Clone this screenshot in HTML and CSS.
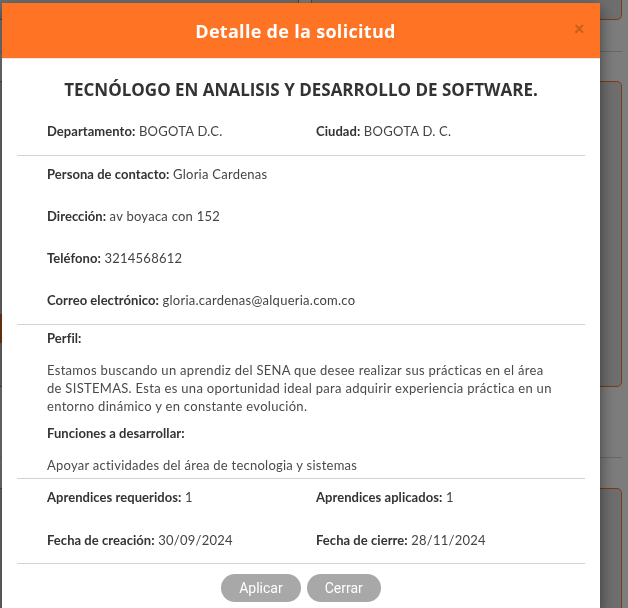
FILE: index.html
```html
<!DOCTYPE html>
<html lang="es">
<head>
<meta charset="utf-8">
<title>Detalle de la solicitud</title>
<link rel="stylesheet" href="styles.css">
</head>
<body>
<div class="page">
  <div class="page-row row-a">
    <div class="bg-card"></div>
    <div class="bg-card"></div>
  </div>
  <div class="page-divider"></div>
  <div class="page-row row-b">
    <div class="bg-card"><div class="bg-btn"></div></div>
    <div class="bg-card"></div>
  </div>
  <div class="page-divider second"></div>
  <div class="page-row row-c">
    <div class="bg-card"></div>
    <div class="bg-card"></div>
  </div>
</div>

<div class="overlay">
  <div class="modal">
    <div class="modal-header">
      <h3 class="modal-title">Detalle de la solicitud</h3>
      <span class="close">×</span>
    </div>
    <div class="modal-body">
      <h4 class="program">TECNÓLOGO EN ANALISIS Y DESARROLLO DE SOFTWARE.</h4>
      <div class="grid2 first-grid">
        <p class="field"><b>Departamento:</b> BOGOTA D.C.</p>
        <p class="field"><b>Ciudad:</b> BOGOTA D. C.</p>
      </div>
      <hr class="sep">
      <div class="block contact">
        <p class="field"><b>Persona de contacto:</b> Gloria Cardenas</p>
        <p class="field"><b>Dirección:</b> av boyaca con 152</p>
        <p class="field"><b>Teléfono:</b> 3214568612</p>
        <p class="field"><b>Correo electrónico:</b> gloria.cardenas@alqueria.com.co</p>
      </div>
      <hr class="sep">
      <div class="block profile">
        <p class="field"><b>Perfil:</b></p>
        <p class="text para">Estamos buscando un aprendiz del SENA que desee realizar sus prácticas en el área de SISTEMAS. Esta es una oportunidad ideal para adquirir experiencia práctica en un entorno dinámico y en constante evolución.</p>
        <p class="field sub"><b>Funciones a desarrollar:</b></p>
        <p class="text">Apoyar actividades del área de tecnologia y sistemas</p>
      </div>
      <hr class="sep">
      <div class="grid2 stats">
        <p class="field"><b>Aprendices requeridos:</b> 1</p>
        <p class="field"><b>Aprendices aplicados:</b> 1</p>
        <p class="field"><b>Fecha de creación:</b> 30/09/2024</p>
        <p class="field"><b>Fecha de cierre:</b> 28/11/2024</p>
      </div>
      <hr class="sep">
      <div class="actions">
        <button class="btn" type="button">Aplicar</button>
        <button class="btn" type="button">Cerrar</button>
      </div>
    </div>
  </div>
</div>
</body>
</html>
```

FILE: styles.css
```css
* { box-sizing: border-box; }

html, body {
  margin: 0;
  padding: 0;
  height: 100%;
  overflow: hidden;
}

body {
  background: #f8f8f8;
  font-family: "Lato", "Open Sans", sans-serif;
}

/* background page (dimmed behind the modal) */
.page {
  padding: 0 6px 0 0;
  margin-left: -12px;
}

.page-row {
  display: grid;
  grid-template-columns: 1fr 1fr;
  gap: 12px;
}

.bg-card {
  background: #dcdcdc;
  border: 1px solid #ff7424;
  border-radius: 5px;
}

.row-a { margin-top: -40px; height: 60px; }
.page-divider {
  margin-top: 31px;
  height: 1px;
  background: #cfcfcf;
}
.row-b { margin-top: 29px; height: 306px; }
.page-divider.second { margin-top: 70px; }
.row-c { margin-top: 30px; height: 200px; }

.bg-btn {
  margin-top: 232px;
  height: 29px;
  width: 120px;
  background: #ff7424;
}

/* overlay + modal */
.overlay {
  position: fixed;
  inset: 0;
  background: rgba(0, 0, 0, 0.5);
}

.modal {
  position: absolute;
  left: 2px;
  top: 3px;
  width: 598px;
  background: #fff;
  box-shadow: 0 5px 15px rgba(0, 0, 0, 0.5);
  border-radius: 2px 2px 0 0;
}

.modal-header {
  display: flex;
  align-items: center;
  height: 56px;
  padding: 0 12px 0 15px;
  background: #ff7424;
  border-bottom: 1px solid #e5e5e5;
}

.modal-title {
  flex: 1;
  margin: 0;
  text-align: center;
  color: #fff;
  font-family: "Open Sans", sans-serif;
  font-weight: 700;
  font-size: 18px;
  letter-spacing: 0.3px;
  line-height: 20px;
}

.close {
  width: 14px;
  font-family: "Liberation Sans", sans-serif;
  font-size: 18px;
  font-weight: 700;
  line-height: 1;
  color: rgba(0, 0, 0, 0.2);
  margin-top: -4px;
}

.modal-body {
  padding: 0 15px 10px;
}

.program {
  margin: 21px 0 0;
  text-align: center;
  font-family: "Open Sans", sans-serif;
  font-weight: 700;
  font-size: 17px;
  line-height: 20px;
  color: #333;
}

.field, .text {
  margin: 0;
  font-size: 13px;
  line-height: 18px;
  color: #444;
  letter-spacing: 0.25px;
}

.field b {
  font-weight: 700;
  color: #333;
  letter-spacing: 0.05px;
}

.text { color: #4a4a4a; }
.para { letter-spacing: 0.3px; }

.grid2 {
  display: grid;
  grid-template-columns: 1fr 1fr;
  padding: 0 15px;
}

.grid2 .field { padding: 0 15px; }

.first-grid { margin-top: 22px; }

.sep {
  margin: 15px 0 0;
  border: 0;
  border-top: 1px solid #d2d2d2;
  height: 0;
}

.block {
  padding: 0 30px;
  display: flex;
  flex-direction: column;
}

.contact { padding-top: 9px; gap: 24px; }

.profile { padding-top: 4px; }
.profile .text { margin-top: 14px; }
.profile .sub { margin-top: 9px; }

.profile + .sep { margin-top: 4px; }

.stats { padding-top: 9px; row-gap: 25px; }
.stats + .sep { margin-top: 14px; }

.contact + .sep { margin-top: 15px; }

.actions {
  display: flex;
  justify-content: center;
  gap: 6px;
  padding-top: 10px;
}

.btn {
  height: 28px;
  padding: 0 18px;
  border: 0;
  border-radius: 14px;
  background: #a8a8a8;
  color: #fff;
  font-family: "Roboto", sans-serif;
  font-size: 14px;
}
```
